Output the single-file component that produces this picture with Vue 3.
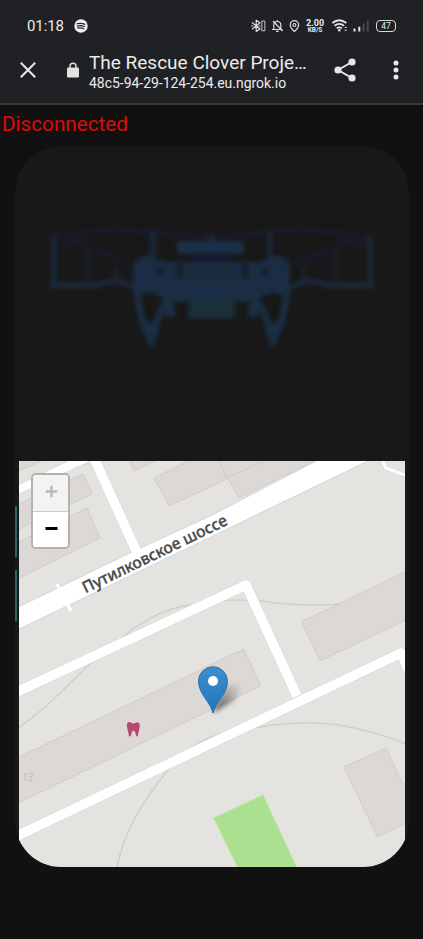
<script setup>
const status = 'Disconnected'
const street = 'Путилковское шоссе'
</script>

<template>
  <div class="phone">
    <header class="browser">
      <div class="statusbar">
        <span class="time">01:18</span>
        <svg class="spotify" viewBox="0 0 14 14"><circle cx="7" cy="7" r="6.7" fill="#f1f1f1" /><path d="M3 4.8Q7 3.6 11 5.3M3.4 7.1Q7 6 10.5 7.5M3.8 9.2Q7 8.4 9.9 9.7" fill="none" stroke="#202124" stroke-width="1.2" stroke-linecap="round" /></svg>
        <svg class="sys" viewBox="250 16 52 20" fill="none" stroke="#dedede" stroke-width="1.2" stroke-linejoin="round">
          <path d="M252 22.5l8 6.5-3.8 2.6V20.2l3.8 2.6-8 6.5M251.3 26h2M258.5 26h2" />
          <rect x="261.8" y="21.2" width="3" height="9.4" stroke="#aaa" />
          <path d="M273.800 29.3v-4.2c0-2 1.4-3.6 3.500-3.6s3.500 1.6 3.500 3.6v4.2M272 29.5h10.5M277.3 21.3v-1M276 31.3h2.6M273 21l9.5 10" />
          <path d="M294.4 31.5c-2.6-2.5-4.2-4.4-4.2-6.6a4.2 4.2 0 0 1 8.4 0c0 2.200-1.600 4.100-4.200 6.600z" /><circle cx="294.4" cy="25" r="1.5" />
        </svg>
        <div class="rate"><b>2.00</b><b>KB/S</b></div>
        <svg class="signal" viewBox="330 16 40 20" fill="none" stroke="#e4e4e4">
          <path d="M332.300 23q7-5.600 14 0M334.500 25.800q4.800-3.800 9.600 0M336.700 28.400q2.600-2 5.200 0" stroke-width="1.8" />
          <circle cx="339.300" cy="30.300" r="1.300" fill="#e4e4e4" stroke="none" />
          <path d="M344.300 28l1.400-1.600 1.400 1.600zM344.300 29.700l1.400 1.600 1.400-1.600z" fill="#ddd" stroke="none" />
          <path d="M354.500 28.500v3M359.300 26.800v4.700" stroke-width="2" />
          <path d="M363.600 23.500v8M367.800 20.500v11" stroke="#4a4b4e" stroke-width="1.800" />
        </svg>
        <span class="battery">47</span>
      </div>
      <div class="toolbar">
        <svg class="close" viewBox="0 0 16 16"><path d="M.8.8l14.400 14.400M15.200.8L.8 15.200" stroke="#e4e4e4" stroke-width="2.100" /></svg>
        <svg class="lock" viewBox="0 0 12 16"><path d="M3 7V4.300a3 3 0 0 1 6 0V7" fill="none" stroke="#dedede" stroke-width="1.500" /><rect y="5.500" width="12" height="10" rx="1.300" fill="#e2e2e2" /></svg>
        <div class="titles">
          <div class="title">The Rescue Clover Proje…</div>
          <div class="url">48c5-94-29-124-254.eu.ngrok.io</div>
        </div>
        <svg class="share" viewBox="0 0 22 24" fill="#e6e6e6"><path d="M18 4L4 12l14 8" fill="none" stroke="#e6e6e6" stroke-width="2" /><circle cx="18" cy="4" r="3.600" /><circle cx="4" cy="12" r="3.600" /><circle cx="18" cy="20" r="3.600" /></svg>
        <svg class="more" viewBox="0 0 6 20" fill="#e6e6e6"><circle cx="3" cy="3" r="2.500" /><circle cx="3" cy="10" r="2.500" /><circle cx="3" cy="17" r="2.500" /></svg>
      </div>
    </header>

    <main>
      <p class="state">{{ status }}</p>
      <section class="card">
        <svg class="drone" viewBox="15 146 394 315">
          <g class="shape" fill="none" stroke="#1b2e44">
            <path d="M54 236Q100 228 151 232T212 236T270 232Q325 228 370 237" stroke="#1a1a2b" stroke-width="5" />
            <path d="M60 243L90 241M370 243L335 242M95 252Q115 254 126 266M329 252Q306 255 294 266" stroke="#1b1928" stroke-width="6" />
            <path d="M54 235V286M370 235V286" stroke-width="6" stroke="#1a2839" />
            <path d="M50 285.500H95L117 280L140 291M374 285.500H329L307 280L284 291" stroke-width="5" stroke="#1b2b3e" />
            <path d="M87 249V285M335 249V285M116 266V280M304 266V280" stroke-width="5" stroke="#19222c" />
            <path d="M153 231V262M270 231V262" stroke-width="6" stroke="#1a2838" />
            <path d="M178 242H206L211 237L216 242H243V253H178Z" fill="#1b304a" stroke-width="2" />
            <path d="M192 259H232" stroke="#1a1a31" stroke-width="6" />
            <path d="M134 267Q136 258 147 257L165 263H260L275 257Q288 258 289 267V287L282 294L270 292L256 298L248 301H174L164 298L155 292L140 293L133 285Z" fill="#1a2d45" stroke-width="2" />
            <path d="M190 264H234V283H190Z" fill="#1b2c3e" stroke="none" />
            <path d="M180 264V278M245 264V278M160 267V276M265 267V276" stroke="#191e29" stroke-width="7" />
            <path d="M137 291C140 319 144 327 151 341C158 327 154 321 165 304M287 291C284 319 280 327 273 341C266 327 270 321 259 304" stroke-width="7" />
            <path d="M151 322V339M273 322V339" stroke-width="8" />
            <path d="M166 291L171 317M257 291L252 317" stroke-width="10" />
            <path d="M189 301H234V318H189Z" fill="#19303a" stroke="#19303a" />
          </g>
        </svg>
        <div class="map">
          <svg class="tiles" viewBox="19 461 386 406" preserveAspectRatio="none">
            <defs>
              <linearGradient id="pin" x1="0" y1="0" x2="0" y2="1"><stop offset="0" stop-color="#3d8fcb" /><stop offset="1" stop-color="#2076c0" /></linearGradient>
              <linearGradient id="shade" x1="0" y1="1" x2="1" y2="0"><stop offset="0" stop-color="#222" stop-opacity=".75" /><stop offset="1" stop-color="#444" stop-opacity=".04" /></linearGradient>
              <filter id="soft" x="-30%" y="-30%" width="160%" height="160%"><feGaussianBlur stdDeviation="2" /></filter>
            </defs>
            <rect x="18" y="460" width="388" height="408" fill="#e4e3df" />
            <g fill="#dcd8d5" stroke="#cfcbc8" stroke-width="1">
              <path d="M17 758L243.700 649L261 685.700L17 803.500Z" />
              <path d="M301.700 621.700L406 571.500V620L320 660.700Z" />
              <path d="M343.700 767L386 748L406 791V823L377.700 837Z" />
              <path d="M154 478L190 460H218L227 479L169 506Z" />
              <path d="M218 460L239 498L316 460Z" /><path d="M227 478L266 460" />
              <path d="M129 460L134 471L157 460Z" />
              <path d="M17 505L83 474L92 494L17 530Z" />
              <path d="M17 543L87 508L100 538L17 579Z" />
              <path d="M17 472L43 460H17Z" />
            </g>
            <path d="M213.700 818L263 795L297 868H238Z" fill="#aae08f" stroke="#b9e8a2" />
            <g fill="none" stroke="#cdd1c3" stroke-width="1.400">
              <path d="M18 728C50 706 66 686 88 666Q105 649 123 637Q155 610 190 605Q225 598 261 601Q300 607 339 604" />
              <path d="M117 867C123 836 138 806 168 770Q190 745 211 737Q240 728 261 727Q300 720 339 725Q378 732 406 744" />
            </g>
            <g class="casing">
              <path d="M17 692L246 585L297 696" /><path d="M17 836L401 653L412 677" />
              <path d="M94 458L137 553" />
              <path d="M381 458L386 468L394 471L407 476" class="thin" />
            </g>
            <path d="M17 485.500L70 460H93L17 495Z" fill="#fff" stroke="#dcdae2" />
            <path d="M17 607.500L132 552L211 515.500L318 460H370L211 537L17 630Z" fill="#fff" stroke="#dad8e2" stroke-width="1.200" />
            <g class="road">
              <path d="M17 692L246 585L297 696" /><path d="M17 836L401 653L412 677" />
              <path d="M94 458L139 557" />
              <path d="M381 458L386 468L394 471L407 476" class="thin" />
              <path d="M57 584L71 611" class="tick" />
            </g>
            <text class="street" transform="translate(85.500 593.500) rotate(-25.800)" textLength="159" lengthAdjust="spacingAndGlyphs">{{ street }}</text>
            <text class="house" x="22" y="781">13</text>
            <path d="M127 723.500C129 720.500 131 723 133.300 723.500C136 723 138 720.500 139.600 724C140.500 727 138.500 731 138 736.500C135.500 737.500 136 731.500 133.300 730.500C131 731.500 132 737.500 129 736.500C128.500 731 126 727 127 723.500Z" fill="#b74a70" stroke="#f1dde2" stroke-width="1.600" paint-order="stroke" />
            <path d="M213 713L222 692Q230 682 238 685Q243 690 233 702Z" fill="url(#shade)" filter="url(#soft)" />
            <path d="M213 713C210.500 702 198.500 694 198.500 681.200A14.500 14.500 0 0 1 227.500 681.200C227.500 694 215.500 702 213 713Z" fill="url(#pin)" stroke="#2d72a8" />
            <circle cx="213" cy="681" r="5" fill="#fff" />
          </svg>
          <div class="zoom">
            <button class="zoom-in" aria-label="+"><svg viewBox="0 0 14 14"><path d="M7 .8v12.400M.8 7h12.400" /></svg></button>
            <button class="zoom-out" aria-label="−"><svg viewBox="0 0 14 14"><path d="M.5 7h13" /></svg></button>
          </div>
        </div>
      </section>
      <div class="slivers"><i></i><i></i></div>
    </main>
  </div>
</template>

<style>
body { margin: 0; background: #111; }
</style>

<style scoped>
.phone { width: 423px; height: 939px; overflow: hidden; background: #111; font-family: Roboto, sans-serif; }
svg { display: block; flex: none; }
.browser { box-sizing: border-box; height: 105px; background: #202124; border-bottom: 2px solid #38393a; color: #ebebeb; }
.statusbar { display: flex; align-items: center; height: 36px; padding: 16px 0 0 27px; box-sizing: border-box; }
.time { width: 47px; font-size: 15px; line-height: 20px; letter-spacing: -.1px; }
.spotify { width: 14px; height: 14px; }
.sys { width: 52px; height: 20px; margin-left: 162px; }
.rate { display: flex; flex-direction: column; align-items: center; width: 20px; margin-left: 3px; font-size: 9px; line-height: 8px; }
.rate b + b { font-size: 6.500px; line-height: 7px; }
.signal { width: 40px; height: 20px; margin-left: 5px; }
.battery { box-sizing: border-box; width: 20px; height: 12px; margin-left: 6px; border: 1.500px solid #d8d8d8; border-radius: 4px; font-size: 8.500px; line-height: 10px; text-align: center; }
.toolbar { display: flex; align-items: center; height: 67px; padding: 1px 0 0 20px; box-sizing: border-box; }
.close { width: 16px; height: 16px; }
.lock { width: 12px; height: 16px; margin-left: 31px; }
.titles { width: 224px; margin-left: 10px; padding-top: 3px; white-space: nowrap; }
.title { font-size: 19px; line-height: 23px; }
.url { font-size: 13.950px; line-height: 19px; }
.share { width: 22px; height: 24px; margin-left: 21px; }
.more { width: 6px; height: 20px; margin-left: 37px; }
main { display: grid; grid-template: 41px 721px / 15px 394px 14px; }
.state { grid-column: 1 / 4; margin: 6px 0 0 2px; font-size: 20.700px; line-height: 26px; color: #e00808; }
.card { grid-area: 2 / 2; display: flex; flex-direction: column; overflow: hidden; border-radius: 46px; background: #181818; }
.drone { width: 394px; height: 315px; }
.shape { filter: blur(2.300px); }
.map { display: grid; width: 386px; height: 406px; margin-left: 4px; }
.tiles { grid-area: 1 / 1; width: 386px; height: 406px; }
.casing path, .road path { fill: none; stroke-linejoin: round; }
.casing path { stroke: #dddbe3; stroke-width: 11; }
.road path { stroke: #fff; stroke-width: 9.500; }
.casing .thin { stroke-width: 4.500; }
.road .thin { stroke-width: 3; }
.road .tick { stroke-width: 3; }
.street { font: 500 16px "Noto Sans", sans-serif; fill: #4b4a4a; stroke: #4b4a4a; stroke-width: .35px; }
.house { font: italic 10px "Noto Sans", sans-serif; fill: #c0bdbd; }
.zoom { grid-area: 1 / 1; z-index: 1; box-sizing: border-box; width: 39px; height: 76px; margin: 12px 0 0 12px; border: 2px solid #b4b2b0; border-radius: 5px; overflow: hidden; background: #fff; }
.zoom button { display: grid; place-items: center; box-sizing: border-box; width: 100%; height: 36px; padding: 0 0 3px 2px; border: 0; background: #fff; }
.zoom .zoom-in { height: 37px; background: #f3f3f3; border-bottom: 1px solid #ccc; }
.zoom svg { width: 13px; height: 13px; fill: none; stroke: #000; stroke-width: 3.200; }
.zoom .zoom-in svg { stroke: #b9b9b9; stroke-width: 2.600; }
.slivers { grid-area: 2 / 1; justify-self: end; display: flex; flex-direction: column; gap: 13px; margin: 360px -2px 0 0; }
.slivers i { width: 2.500px; height: 51px; background: #2b6663; }
</style>
